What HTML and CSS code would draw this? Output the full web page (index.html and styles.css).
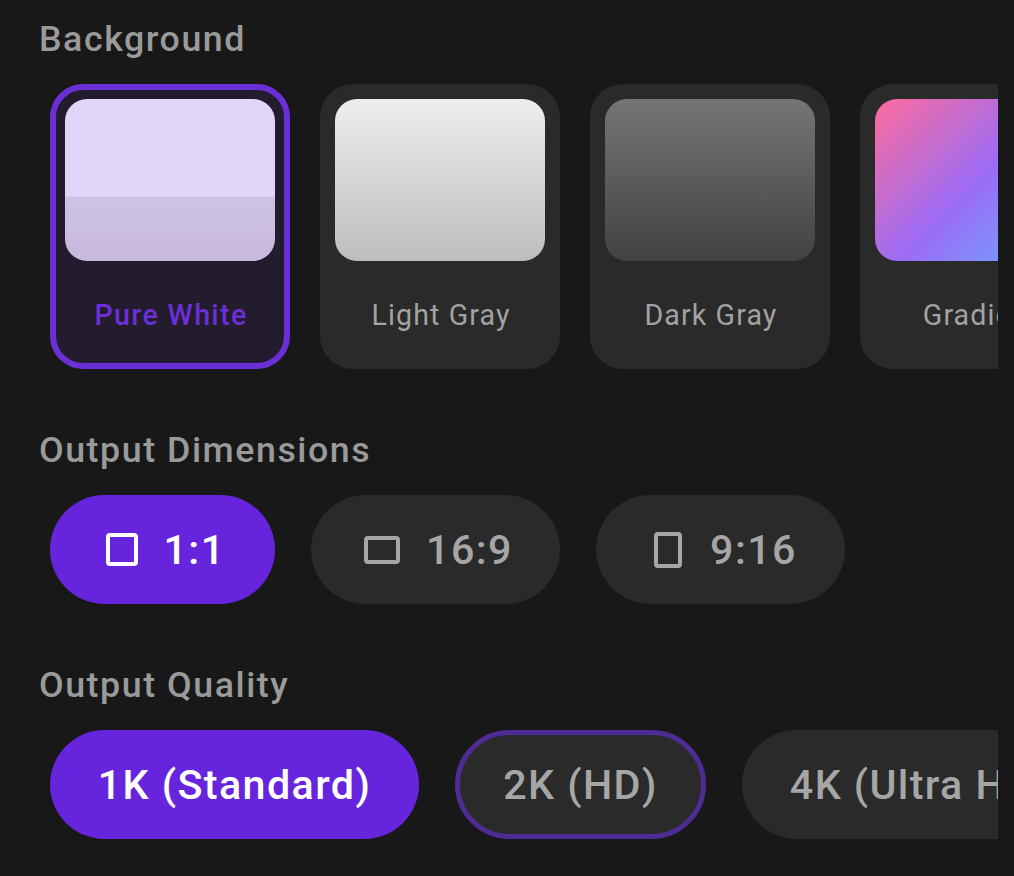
FILE: index.html
```html
<!DOCTYPE html>
<html lang="en">
<head>
<meta charset="utf-8">
<title>Settings</title>
<link rel="stylesheet" href="styles.css">
</head>
<body>
<main class="panel">
  <section class="section section-bg">
    <h2 class="label">Background</h2>
    <div class="scroller cards">
      <div class="card card-active">
        <div class="swatch swatch-white"></div>
        <div class="card-name">Pure White</div>
      </div>
      <div class="card">
        <div class="swatch swatch-light"></div>
        <div class="card-name">Light Gray</div>
      </div>
      <div class="card">
        <div class="swatch swatch-dark"></div>
        <div class="card-name">Dark Gray</div>
      </div>
      <div class="card">
        <div class="swatch swatch-gradient"></div>
        <div class="card-name">Gradient</div>
      </div>
    </div>
  </section>
  <section class="section section-dim">
    <h2 class="label">Output Dimensions</h2>
    <div class="scroller pills">
      <div class="pill pill-active dim-one">
        <svg class="icon" width="32" height="33" viewBox="0 0 32 33"><rect x="2" y="2" width="28" height="29" rx="2"/></svg>
        <span>1:1</span>
      </div>
      <div class="pill dim-wide">
        <svg class="icon" width="36" height="28" viewBox="0 0 36 28"><rect x="2" y="2" width="32" height="24" rx="2"/></svg>
        <span>16:9</span>
      </div>
      <div class="pill dim-tall">
        <svg class="icon" width="28" height="36" viewBox="0 0 28 36"><rect x="2" y="2" width="24" height="32" rx="2"/></svg>
        <span>9:16</span>
      </div>
    </div>
  </section>
  <section class="section section-quality">
    <h2 class="label">Output Quality</h2>
    <div class="scroller pills">
      <div class="pill pill-active q-one"><span>1K (Standard)</span></div>
      <div class="pill pill-outline q-two"><span>2K (HD)</span></div>
      <div class="pill q-three"><span>4K (Ultra HD)</span></div>
    </div>
  </section>
</main>
</body>
</html>
```
FILE: styles.css
```css
* { box-sizing: border-box; }
html, body { margin: 0; height: 100%; }
body {
  background: #181818;
  font-family: Roboto, "Noto Sans", sans-serif;
  overflow: hidden;
}
.panel { padding: 19px 16px 0 39px; }
.section-dim { margin-top: 61px; }
.section-quality { margin-top: 61px; }
.label {
  margin: 0;
  height: 40px;
  line-height: 40px;
  font-size: 35.75px;
  font-weight: 500;
  letter-spacing: 1.55px;
  color: #9a9a9a;
}
.scroller {
  display: flex;
  overflow: hidden;
  margin-top: 25px;
  padding-left: 11px;
}
.cards { gap: 30px; }
.pills { gap: 36px; }
.card {
  flex: 0 0 240px;
  height: 285px;
  padding: 15px;
  border-radius: 33px;
  background: #2a2a2a;
}
.card-active {
  padding: 9px;
  border: 6px solid #6b2fd6;
  background: #231c2f;
}
.swatch {
  height: 162px;
  border-radius: 22px;
}
.swatch-white { background: linear-gradient(180deg, #e1d5f9 0, #e1d5f9 60%, #cfc3e3 60.5%, #c6b9dc 100%); }
.swatch-light { background: linear-gradient(180deg, #eeeeee, #bdbdbd); }
.swatch-dark { background: linear-gradient(180deg, #757575, #424242); }
.swatch-gradient { background: linear-gradient(135deg, #ff6b9d, #9b6cf5 50%, #64b5ff); }
.card-name {
  margin-top: 36px;
  padding-left: 2px;
  text-align: center;
  font-size: 28.6px;
  line-height: 36px;
  letter-spacing: 1.1px;
  color: #a2a2a2;
  white-space: nowrap;
}
.card-active .card-name {
  font-weight: 500;
  letter-spacing: 1.35px;
  color: #6b2fd6;
}
.pill {
  display: flex;
  flex: 0 0 auto;
  align-items: center;
  justify-content: center;
  gap: 26px;
  height: 109px;
  border-radius: 55px;
  background: #2a2a2a;
  color: #a6a6a6;
  font-size: 41.25px;
  font-weight: 500;
  letter-spacing: 1.4px;
  white-space: nowrap;
}
.pill-active { background: #6625dd; color: #fff; }
.pill-outline { border: 5px solid #4f2c94; }
.dim-one { width: 225px; padding-left: 6px; }
.dim-wide { width: 249px; padding-left: 6px; }
.dim-tall { width: 249px; padding-left: 10px; gap: 28px; }
.q-one { width: 369px; }
.q-two { width: 251px; }
.q-three { width: 356px; }
.icon { fill: none; stroke: currentColor; stroke-width: 4px; }
```
